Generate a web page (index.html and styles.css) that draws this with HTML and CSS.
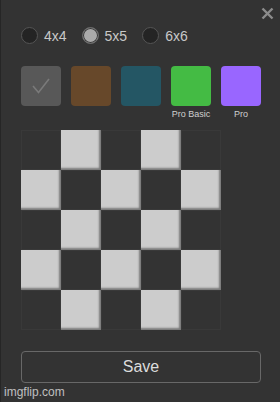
FILE: index.html
```html
<!DOCTYPE html>
<html lang="en">
<head>
    <meta charset="UTF-8">
    <meta name="viewport" content="width=device-width, initial-scale=1.0">
    <title>Board Settings</title>
    <link rel="stylesheet" href="styles.css">
</head>
<body>
    <div class="panel">
        <button class="close" aria-label="Close">
            <svg width="13" height="13" viewBox="0 0 13 13">
                <path d="M1.5 1.5 L11.5 11.5 M11.5 1.5 L1.5 11.5" stroke="#8c8c8c" stroke-width="2.4" fill="none"/>
            </svg>
        </button>

        <div class="sizes">
            <label class="size"><span class="radio"></span>4x4</label>
            <label class="size"><span class="radio on"></span>5x5</label>
            <label class="size"><span class="radio"></span>6x6</label>
        </div>

        <div class="swatches">
            <div class="swatch">
                <div class="chip gray">
                    <svg width="18" height="18" viewBox="0 0 18 18">
                        <path d="M1 9 L6.5 15.5 L17 2" stroke="#7a7a7a" stroke-width="1.6" fill="none"/>
                    </svg>
                </div>
            </div>
            <div class="swatch"><div class="chip brown"></div></div>
            <div class="swatch"><div class="chip teal"></div></div>
            <div class="swatch"><div class="chip green"></div><span class="tag">Pro Basic</span></div>
            <div class="swatch"><div class="chip purple"></div><span class="tag">Pro</span></div>
        </div>

        <div class="board">
            <div class="cell"></div><div class="cell lit"></div><div class="cell"></div><div class="cell lit"></div><div class="cell"></div>
            <div class="cell lit"></div><div class="cell"></div><div class="cell lit"></div><div class="cell"></div><div class="cell lit"></div>
            <div class="cell"></div><div class="cell lit"></div><div class="cell"></div><div class="cell lit"></div><div class="cell"></div>
            <div class="cell lit"></div><div class="cell"></div><div class="cell lit"></div><div class="cell"></div><div class="cell lit"></div>
            <div class="cell"></div><div class="cell lit"></div><div class="cell"></div><div class="cell lit"></div><div class="cell"></div>
        </div>

        <button class="save">Save</button>

        <div class="watermark">imgflip.com</div>
    </div>
</body>
</html>
```

FILE: styles.css
```css
body {
    margin: 0;
    background: #333;
    font-family: "Liberation Sans", Arial, sans-serif;
}

.panel {
    position: relative;
    height: 402px;
    box-sizing: border-box;
    padding: 27px 0 0 20px;
    border-left: 1px solid #262626;
}

.close {
    position: absolute;
    top: 7px;
    right: 6px;
    padding: 0;
    border: none;
    background: none;
    line-height: 0;
    cursor: pointer;
}

.sizes {
    display: flex;
    gap: 15px;
    height: 17px;
}

.size {
    display: flex;
    align-items: center;
    gap: 6px;
    color: #c8c8c8;
    font-size: 14px;
}

.radio {
    width: 17px;
    height: 17px;
    box-sizing: border-box;
    border-radius: 50%;
    border: 1px solid #555;
    background: #242424;
}

.radio.on {
    border-color: #666;
    background: #ababab;
    box-shadow: inset 0 0 0 1px #3a3a3a;
}

.swatches {
    display: flex;
    gap: 10px;
    height: 64px;
    margin-top: 22px;
}

.swatch {
    width: 40px;
    display: flex;
    flex-direction: column;
    align-items: center;
}

.chip {
    width: 40px;
    height: 40px;
    border-radius: 4px;
    display: flex;
    align-items: center;
    justify-content: center;
}

.gray { background: #585858; }
.brown { background: #67482a; }
.teal { background: #245664; }
.green { background: #44bb44; }
.purple { background: #9966ff; }

.tag {
    margin-top: 3px;
    font-size: 9px;
    color: #cfcfcf;
    white-space: nowrap;
}

.board {
    display: grid;
    grid-template-columns: repeat(5, 40px);
    grid-auto-rows: 40px;
    width: 200px;
}

.cell {
    box-sizing: border-box;
    border: 1px solid #393939;
    background: #333;
}

.cell.lit {
    border: none;
    background: #cccccc;
    box-shadow: inset -2px -2px 2px #7a7a7a;
}

.save {
    display: block;
    width: 240px;
    height: 32px;
    margin-top: 21px;
    background: transparent;
    border: 1px solid #686868;
    border-radius: 4px;
    color: #dcdcdc;
    font-family: inherit;
    font-size: 16px;
    cursor: pointer;
}

.watermark {
    position: absolute;
    left: 3px;
    bottom: 3px;
    font-size: 12px;
    color: rgba(255, 255, 255, 0.7);
}
```
